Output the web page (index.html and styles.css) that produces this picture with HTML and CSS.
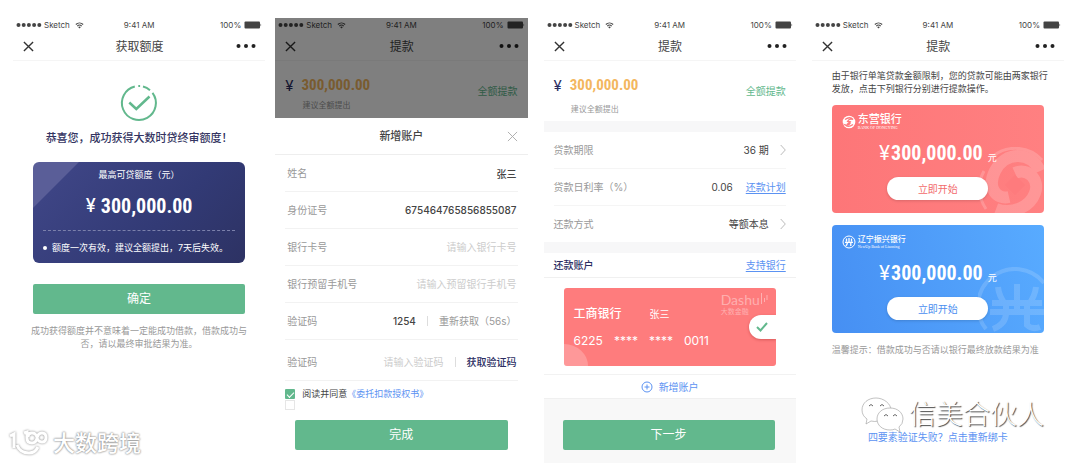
FILE: index.html
```html
<!DOCTYPE html>
<html lang="zh-CN">
<head>
<meta charset="utf-8">
<meta name="viewport" content="width=device-width, initial-scale=1">
<title>提款流程</title>
<link rel="stylesheet" href="styles.css">
</head>
<body>
<svg class="defs" aria-hidden="true">
  <symbol id="dots" viewBox="0 0 26 6"><circle cx="2.5" cy="3" r="2"/><circle cx="7.7" cy="3" r="2"/><circle cx="12.9" cy="3" r="2"/><circle cx="18.1" cy="3" r="2"/><circle cx="23.3" cy="3" r="2"/></symbol>
  <symbol id="wifi" viewBox="0 0 16 12"><path d="M1.5 4.2a9.5 9.5 0 0 1 13 0M4 7a6 6 0 0 1 8 0" fill="none" stroke="currentColor" stroke-width="1.9"/><path d="M5.6 8.8a3.6 3.6 0 0 1 4.8 0L8 11.4z"/></symbol>
  <symbol id="battery" viewBox="0 0 18 8"><rect x=".5" y=".5" width="15.5" height="7" rx="1"/><path d="M16.5 2.5q1.500 1.500 0 3z"/></symbol>
  <symbol id="close" viewBox="0 0 12 12"><path d="M1 1l10 10M11 1L1 11" fill="none" stroke="currentColor"/></symbol>
  <symbol id="more" viewBox="0 0 20 6"><circle cx="2.5" cy="3" r="2"/><circle cx="10" cy="3" r="2"/><circle cx="17.5" cy="3" r="2"/></symbol>
  <symbol id="chevron" viewBox="0 0 6 12"><path d="M.7 1l4.6 5-4.6 5" fill="none" stroke="currentColor"/></symbol>
</svg>

<main class="screens">
  <section class="screen screen--result">
    <div class="status"><span class="status__left"><svg class="i-dots"><use href="#dots"/></svg>Sketch<svg class="i-wifi"><use href="#wifi"/></svg></span><span>9:41 AM</span><span class="status__right">100%<svg class="i-battery"><use href="#battery"/></svg></span></div>
    <header class="nav"><button class="icon-btn" aria-label="关闭"><svg class="i-close"><use href="#close"/></svg></button><h1>获取额度</h1><button class="icon-btn" aria-label="更多"><svg class="i-more"><use href="#more"/></svg></button></header>
    <div class="result">
      <svg class="result__icon" viewBox="0 0 36 36" fill="none" stroke="#62b88d" stroke-width="2"><path d="M13.8 1.5A17 17 0 1 0 31.500 7.800"/><path d="M17.300 1h1.800M22 1.500A17 17 0 0 1 29 5.200"/><path d="M8.300 17.500l7 6.500L28.500 11.500" stroke-width="2.500"/></svg>
      <h2>恭喜您，成功获得大数时贷终审额度！</h2>
      <div class="quota">
        <p>最高可贷额度（元）</p>
        <p class="quota__sum"><span class="yen">¥</span><span class="din din--lg">300,000.00</span></p>
        <p class="quota__note">额度一次有效，建议全额提出，7天后失效。</p>
      </div>
      <button class="primary">确定</button>
      <p class="result__tip">成功获得额度并不意味着一定能成功借款，借款成功与否，请以最终审批结果为准。</p>
    </div>
  </section>

  <section class="screen">
    <div class="dimmed">
      <div class="status"><span class="status__left"><svg class="i-dots"><use href="#dots"/></svg>Sketch<svg class="i-wifi"><use href="#wifi"/></svg></span><span>9:41 AM</span><span class="status__right">100%<svg class="i-battery"><use href="#battery"/></svg></span></div>
      <header class="nav"><button class="icon-btn" aria-label="关闭"><svg class="i-close"><use href="#close"/></svg></button><h1>提款</h1><button class="icon-btn" aria-label="更多"><svg class="i-more"><use href="#more"/></svg></button></header>
      <div class="amount amount--tight"><span class="amount__yen">¥</span><div><strong class="din">300,000.00</strong><p class="amount__hint">建议全额提出</p></div><button class="text-btn amount__all">全额提款</button></div>
    </div>
    <form class="sheet">
      <div class="sheet__head"><h2>新增账户</h2><button type="button" class="icon-btn sheet__close" aria-label="关闭"><svg><use href="#close"/></svg></button></div>
      <div class="fields">
        <div class="field"><label for="name">姓名</label><input id="name" value="张三"></div>
        <div class="field"><label for="idno">身份证号</label><input id="idno" value="675464765856855087"></div>
        <div class="field"><label for="card">银行卡号</label><input id="card" placeholder="请输入银行卡号"></div>
        <div class="field"><label for="phone">银行预留手机号</label><input id="phone" placeholder="请输入预留银行手机号"></div>
        <div class="field"><label for="code1">验证码</label><input id="code1" value="1254"><button type="button" class="text-btn code-btn code-btn--wait">重新获取（56s）</button></div>
        <div class="field field--last"><label for="code2">验证码</label><input id="code2" placeholder="请输入验证码"><button type="button" class="text-btn code-btn">获取验证码</button></div>
      </div>
      <div class="agree">
        <input type="checkbox" id="agree" checked><label for="agree">阅读并同意</label><a href="#">《委托扣款授权书》</a>
      </div>
      <div class="agree agree--empty"><input type="checkbox" aria-label="同意"></div>
      <button type="button" class="primary primary--sheet">完成</button>
    </form>
  </section>

  <section class="screen screen--loan">
    <div class="status"><span class="status__left"><svg class="i-dots"><use href="#dots"/></svg>Sketch<svg class="i-wifi"><use href="#wifi"/></svg></span><span>9:41 AM</span><span class="status__right">100%<svg class="i-battery"><use href="#battery"/></svg></span></div>
    <header class="nav"><button class="icon-btn" aria-label="关闭"><svg class="i-close"><use href="#close"/></svg></button><h1>提款</h1><button class="icon-btn" aria-label="更多"><svg class="i-more"><use href="#more"/></svg></button></header>
    <div class="amount"><span class="amount__yen">¥</span><div><strong class="din">300,000.00</strong><p class="amount__hint">建议全额提出</p></div><button class="text-btn amount__all">全额提款</button></div>
    <dl class="rows">
      <div class="row"><dt>贷款期限</dt><dd>36 期</dd><dd class="row__go"><svg class="i-chevron"><use href="#chevron"/></svg></dd></div>
      <div class="row"><dt>贷款日利率（%）</dt><dd>0.06</dd><dd><a class="link" href="#">还款计划</a></dd></div>
      <div class="row"><dt>还款方式</dt><dd>等额本息</dd><dd class="row__go"><svg class="i-chevron"><use href="#chevron"/></svg></dd></div>
    </dl>
    <div class="account-head"><h2>还款账户</h2><a class="link" href="#">支持银行</a></div>
    <div class="bankcard">
      <svg class="bankcard__curve" viewBox="0 0 24 22"><path d="M0 0A24 22 0 0 1 24 22H0z" fill="#fff" opacity=".22"/></svg>
      <div class="bankcard__brand"><span>Dashu<svg viewBox="0 0 8 12" fill="none" stroke="currentColor"><path d="M1.500 0v11M4.500 5v4M7 2v5"/></svg></span><small>大数金融</small></div>
      <p class="bankcard__name"><b>工商银行</b><span>张三</span></p>
      <p class="bankcard__no"><span>6225</span><span>****</span><span>****</span><span>0011</span></p>
      <span class="bankcard__tick"><svg viewBox="0 0 12 10"><path d="M1 5l3.500 3.500L11 1" fill="none" stroke="#62b88d" stroke-width="2"/></svg></span>
    </div>
    <button class="add"><svg viewBox="0 0 12 12" fill="none" stroke="currentColor"><circle cx="6" cy="6" r="5"/><path d="M6 3.500v5M3.500 6h5"/></svg>新增账户</button>
    <div class="footer"><button class="primary">下一步</button></div>
  </section>

  <section class="screen">
    <div class="status"><span class="status__left"><svg class="i-dots"><use href="#dots"/></svg>Sketch<svg class="i-wifi"><use href="#wifi"/></svg></span><span>9:41 AM</span><span class="status__right">100%<svg class="i-battery"><use href="#battery"/></svg></span></div>
    <header class="nav"><button class="icon-btn" aria-label="关闭"><svg class="i-close"><use href="#close"/></svg></button><h1>提款</h1><button class="icon-btn" aria-label="更多"><svg class="i-more"><use href="#more"/></svg></button></header>
    <div class="banks">
      <p class="banks__intro">由于银行单笔贷款金额限制，您的贷款可能由两家银行发放，点击下列银行分别进行提款操作。</p>
      <article class="bank bank--red">
        <svg class="bank__mark" viewBox="0 0 66 66"><g fill="none" stroke="#fff" opacity=".18"><path d="M8 62A36 36 0 0 1 6 24" stroke-width="3"/><path d="M14 10A36 36 0 0 1 64 13" stroke-width="3"/><path d="M62 24C53 4 27 4 17 24C9 40 18 53 31 50" stroke-width="12"/><path d="M37 26C50 20 62 33 57 46C52 60 34 68 18 62" stroke-width="12"/></g><path d="M37 28l10 10-10 10-10-10z" fill="#fe7b7d"/></svg>
        <div class="bank__brand"><svg viewBox="0 0 14 14"><circle cx="7" cy="7" r="6.300" fill="#fff"/><path d="M3 4.500Q8 1 11 4.500Q7 3 5.500 6.500L8 6.700L5 9.500M11 9.500Q6 13 3 9.800Q7 11 8.500 7.500" fill="none" stroke="#fe7b7d" stroke-width="1.300"/></svg><div><b>东营银行</b><small>BANK OF DONGYING</small></div></div>
        <p class="bank__sum"><span class="bank__yen">¥</span><span class="din din--lg">300,000.00</span><span class="bank__unit">元</span></p>
        <button class="pill">立即开始</button>
      </article>
      <article class="bank bank--blue">
        <svg class="bank__mark" viewBox="0 0 66 66"><g fill="none" stroke="#fff" opacity=".15"><path d="M8 62A36 36 0 1 1 66 16" stroke-width="4"/><path d="M20 20q1 9 7 17M39 17v27M58 20q-1 9-7 17M14 36h50M12 45h54M28 36v10q0 11-13 16M49 36v22q5 5 13 2" stroke-width="6"/></g></svg>
        <div class="bank__brand"><svg viewBox="0 0 14 14" fill="none" stroke="#fff"><circle cx="7" cy="7" r="6"/><path d="M4.500 3.500v3M7 3v4M9.500 3.500v3M3 7.300h8M5.500 7.500Q5 10 3.800 11M8.800 7.500V11" stroke-width="1.300"/></svg><div><b>辽宁振兴银行</b><small>NewUp Bank of Liaoning</small></div></div>
        <p class="bank__sum"><span class="bank__yen">¥</span><span class="din din--lg">300,000.00</span><span class="bank__unit">元</span></p>
        <button class="pill">立即开始</button>
      </article>
      <p class="banks__tip">温馨提示：借款成功与否请以银行最终放款结果为准</p>
      <a class="banks__retry" href="#">四要素验证失败？点击重新绑卡</a>
    </div>
  </section>
</main>

<div class="stamp stamp--left"><svg viewBox="0 0 40 26" fill="none" stroke="#fff" stroke-width="3"><path d="M2 6l4-2v14M9 15q3 8 12 8q6 0 9-6M16 3l3-1v6q0 5 5 5q4 0 5-5q1-5 5-5q4 0 4 4.500t-4 4.500q-4 0-5-4.500t-5-4.500q-4 0-4 4"/></svg><span>大数跨境</span></div>
<div class="stamp stamp--right"><svg viewBox="0 0 44 36" fill="#fff" stroke="#999" stroke-width=".6"><path d="M15 1C7 1 1 6 1 13c0 4 2 7 5 9l-1 5 5-3q4 1 7 0C26 24 30 19 30 13S23 1 15 1z"/><path d="M29 11c-8 0-13 5-13 11s5 11 13 11q3 0 5-1l5 3-1-5q4-3 4-8c0-6-5-11-13-11z"/><path d="M8 9q2-3 4 0M19 9q2-3 4 0M23 19q2-3 4 0M32 19q2-3 4 0" fill="none" stroke="#666" stroke-width="1"/></svg><span>信美合伙人</span></div>
</body>
</html>
```
FILE: styles.css
```css
* { box-sizing: border-box; }
body, h1, h2, p, dl, dt, dd { margin: 0; }
body {
  position: relative;
  min-height: 100vh;
  background: #fff;
  color: #444;
  font: 10px/14px Inter, "Noto Sans CJK SC", sans-serif;
}
button { border: 0; padding: 0; background: none; font: inherit; color: inherit; cursor: pointer; }
input { font: inherit; color: inherit; }
a { color: #5b92f2; text-decoration: none; }
svg { display: block; }
.defs { position: absolute; width: 0; height: 0; }

.screens { display: flex; gap: 16px; min-height: 100vh; padding: 18px 16px 0 13px; }
.screen { flex: 1 1 0; min-width: 0; display: flex; flex-direction: column; }
.screen--result { margin-right: -6px; }

.status { display: grid; grid-template-columns: 1fr auto 1fr; align-items: center; height: 14px; padding: 0 3px; font-size: 8px; }
.status__left, .status__right { display: flex; align-items: center; gap: 2px; }
.status__right { justify-content: flex-end; gap: 3px; }
.i-dots, .i-wifi, .i-battery, .i-more { fill: currentColor; }
.i-dots { width: 26px; height: 6px; }
.i-wifi { width: 9px; height: 7px; margin-left: 3px; }
.i-battery { width: 18px; height: 8px; }

.nav { display: grid; grid-template-columns: 1fr auto 1fr; align-items: center; height: 29px; padding: 0 9px 0 10px; border-bottom: 1px solid #f5f5f5; }
.nav h1 { padding-top: 2px; font-size: 12px; line-height: 16px; font-weight: 400; }
.icon-btn { justify-self: start; }
.nav .icon-btn:last-child { justify-self: end; }
.i-close { width: 11px; height: 11px; color: #333; stroke-width: 1.5; }
.i-more { width: 20px; height: 6px; color: #222; }

.primary { display: block; width: 100%; height: 30px; border-radius: 2px; background: #62b88d; color: #fff; font-size: 12px; }
.din { font: bold 15px/20px "Roboto Condensed", "Liberation Sans Narrow", Roboto, sans-serif; }
.din--lg { font-size: 20px; line-height: 24px; }

/* Result */
.result { padding: 24px 20px 0; text-align: center; }
.result__icon { width: 36px; height: 36px; margin: 0 auto; overflow: visible; }
.result h2 { margin: 10px -8px 17px; color: #343562; font-size: 11px; line-height: 14px; font-weight: 500; }
.quota { margin-bottom: 21px; padding: 6px 10px 8px; border-radius: 6px; background: linear-gradient(135deg, #5a5e98 0 32px, #3d4484 33px, #323a75 60%, #2d3263); color: #fff; font-size: 9px; }
.quota__sum { display: flex; justify-content: center; align-items: center; gap: 5px; padding: 12px 0 12px; }
.yen { font: 500 18px/24px Inter, sans-serif; }
.quota__note { display: flex; align-items: center; gap: 5px; padding-top: 10px; border-top: 1px dashed #7b80ab; text-align: left; }
.quota__note::before { content: ""; width: 4px; height: 4px; border-radius: 50%; background: #fff; }
.result__tip { margin: 10px -3px 0; color: #999; font-size: 9px; line-height: 13px; }

/* Amount */
.dimmed { position: relative; }
.dimmed::after { content: ""; position: absolute; inset: 0; background: rgba(0, 0, 0, .5); }
.amount { display: flex; gap: 8px; padding: 14px 10px 6px; }
.amount__yen { color: #2b2d62; font-size: 15px; line-height: 22px; }
.amount .din { display: block; color: #f3b75f; }
.amount__hint { margin-top: 8px; padding-left: 1px; color: #999; font-size: 8px; line-height: 12px; }
.amount__all { align-self: flex-start; margin: 9px 0 0 auto; color: #62b88d; }
.amount--tight { padding-bottom: 7px; }
.amount--tight .amount__hint { margin-top: 4px; }

/* Sheet */
.sheet__head { display: grid; grid-template-columns: 1fr auto 1fr; align-items: center; height: 37px; padding: 0 10px; border-bottom: 1px solid #eee; }
.sheet__head h2 { grid-column: 2; font-size: 11px; font-weight: 500; }
.sheet__close { justify-self: end; }
.sheet__close svg { width: 11px; height: 11px; color: #aaa; }
.fields { padding: 0 10px; }
.field { display: flex; align-items: center; height: 37px; padding: 0 1px 0 2px; border-bottom: 1px solid #f2f2f2; }
.field--last { height: 41px; padding-top: 4px; }
.field label { flex: none; color: #999; }
.field input { flex: 1; min-width: 0; height: 20px; padding: 0; border: 0; background: none; text-align: right; font-weight: 500; }
.field input::placeholder { color: #ccc; font-weight: 400; }
.code-btn { margin-left: 11px; padding-left: 11px; border-left: 1px solid #ddd; line-height: 10px; color: #2b2d62; font-weight: 500; }
.code-btn--wait { color: #999; font-weight: 400; }
.agree { display: flex; align-items: center; height: 11px; padding-left: 10px; font-size: 9px; }
.agree:not(.agree--empty) { margin-top: 7px; }
.agree input { appearance: none; width: 10px; height: 10px; margin: 0 7px 0 0; border: 1px solid #e6e6e6; }
.agree input:checked { border: 0; border-radius: 1px; background: #62b88d; display: grid; place-items: center; }
.agree input:checked::before { content: ""; width: 6px; height: 3px; border: solid #fff; border-width: 0 0 1px 1px; transform: rotate(-45deg); }
.primary--sheet { width: auto; min-width: calc(100% - 40px); margin: 10px 20px 0; }

/* Loan */
.rows { border-top: 11px solid #f7f7f8; border-bottom: 11px solid #f7f7f8; padding: 0 10px; }
.row { display: flex; align-items: center; height: 37px; border-bottom: 1px solid #f5f5f5; }
.row:last-child { border-bottom: 0; height: 36px; }
.row dt { margin-right: auto; color: #999; }
.row dd + dd { margin-left: 13px; }
.row .row__go { margin-left: 11px; }
.i-chevron { width: 6px; height: 12px; color: #bbb; }
.link { text-decoration: underline; text-underline-offset: 2px; }
.account-head { display: flex; justify-content: space-between; align-items: center; height: 25px; padding: 0 10px; border-bottom: 1px solid #f0f0f0; }
.account-head h2 { color: #2b2d62; font-size: 10px; font-weight: 500; }
.bankcard { position: relative; margin: 10px 20px 8px; padding: 18px 10px; border-radius: 3px; background: #fe7c7d; color: #fff; overflow: hidden; }
.bankcard__curve { position: absolute; left: 0; bottom: 0; width: 24px; height: 22px; }
.bankcard__name { display: flex; align-items: center; gap: 28px; margin-bottom: 11px; line-height: 16px; }
.bankcard__name b { font-size: 12px; font-weight: 500; }
.bankcard__no { display: flex; gap: 11px; font-size: 12px; line-height: 15px; }
.bankcard__brand { position: absolute; top: 5px; right: 8px; color: rgba(255, 255, 255, .4); font: 14px/14px Lato, sans-serif; }
.bankcard__brand span { display: flex; }
.bankcard__brand svg { width: 8px; height: 12px; }
.bankcard__brand small { display: block; font: 7px/8px "Noto Sans CJK SC", sans-serif; }
.bankcard__tick { position: absolute; right: 0; top: 27px; display: grid; place-items: center; width: 27px; height: 24px; border-radius: 12px 0 0 12px; background: #fff; box-shadow: 0 1px 3px rgba(160, 40, 40, .4); }
.bankcard__tick svg { width: 12px; height: 10px; }
.add { display: flex; justify-content: center; align-items: center; gap: 6px; height: 25px; border-top: 1px solid #f2f2f2; border-bottom: 1px solid #f0f0f0; color: #5b92f2; }
.add svg { width: 12px; height: 12px; }
.footer { flex: 1; padding: 21px 21px 13px 19px; background: #f8f8f8; }

/* Banks */
.banks { padding: 8px 20px 0; }
.banks__intro { margin: 0 -10px 10px 0; padding-right: 4px; font-size: 9px; line-height: 13px; }
.bank { position: relative; height: 108px; margin-bottom: 12px; padding: 9px 10px; border-radius: 4px; color: #fff; overflow: hidden; }
.bank--red { background: linear-gradient(90deg, #fd7678, #ff8081); }
.bank--blue { background: linear-gradient(75deg, #468ff3, #58abff); }
.bank__mark { position: absolute; right: 0; bottom: 0; width: 66px; height: 66px; }
.bank__brand { display: flex; align-items: center; gap: 2px; height: 16px; }
.bank__brand > svg { width: 14px; height: 14px; }
.bank__brand b { display: block; font-size: 11px; line-height: 11px; font-weight: 500; }
.bank__brand small { display: block; font: 4px/5px "Liberation Serif", serif; }
.bank--blue b { font-size: 8px; line-height: 9px; }
.bank__sum { position: relative; display: flex; justify-content: center; align-items: center; gap: 1px; padding: 11px 0 12px; }
.bank__yen { font-size: 20px; line-height: 24px; }
.bank__unit { align-self: flex-end; margin-left: 4px; font-size: 9px; }
.pill { position: relative; display: block; width: 101px; height: 23px; margin: 0 auto; border-radius: 12px; background: #fff; box-shadow: 0 1px 3px rgba(0, 0, 0, .15); color: #f26b6d; }
.bank--blue .pill { color: #4a8ef0; }
.banks__tip { margin: -2px -10px 0 0; color: #999; font-size: 9px; }
.banks__retry { display: block; margin-top: 73px; text-align: center; }

/* Stamps over the screens */
.stamp { position: absolute; display: flex; align-items: center; color: #fff; pointer-events: none; white-space: nowrap; }
.stamp--left { left: 8px; bottom: 6px; gap: 5px; font-size: 22px; line-height: 28px; font-weight: 500; text-shadow: 0 0 2px #888, 0 0 2px #999; }
.stamp--left svg { width: 40px; height: 26px; filter: drop-shadow(0 0 1px #888); }
.stamp--right { right: 36px; bottom: 30px; gap: 4px; font-size: 27px; line-height: 36px; font-weight: 300; text-shadow: 1px 1px 1px #444; }
.stamp--right svg { width: 44px; height: 36px; }
```
